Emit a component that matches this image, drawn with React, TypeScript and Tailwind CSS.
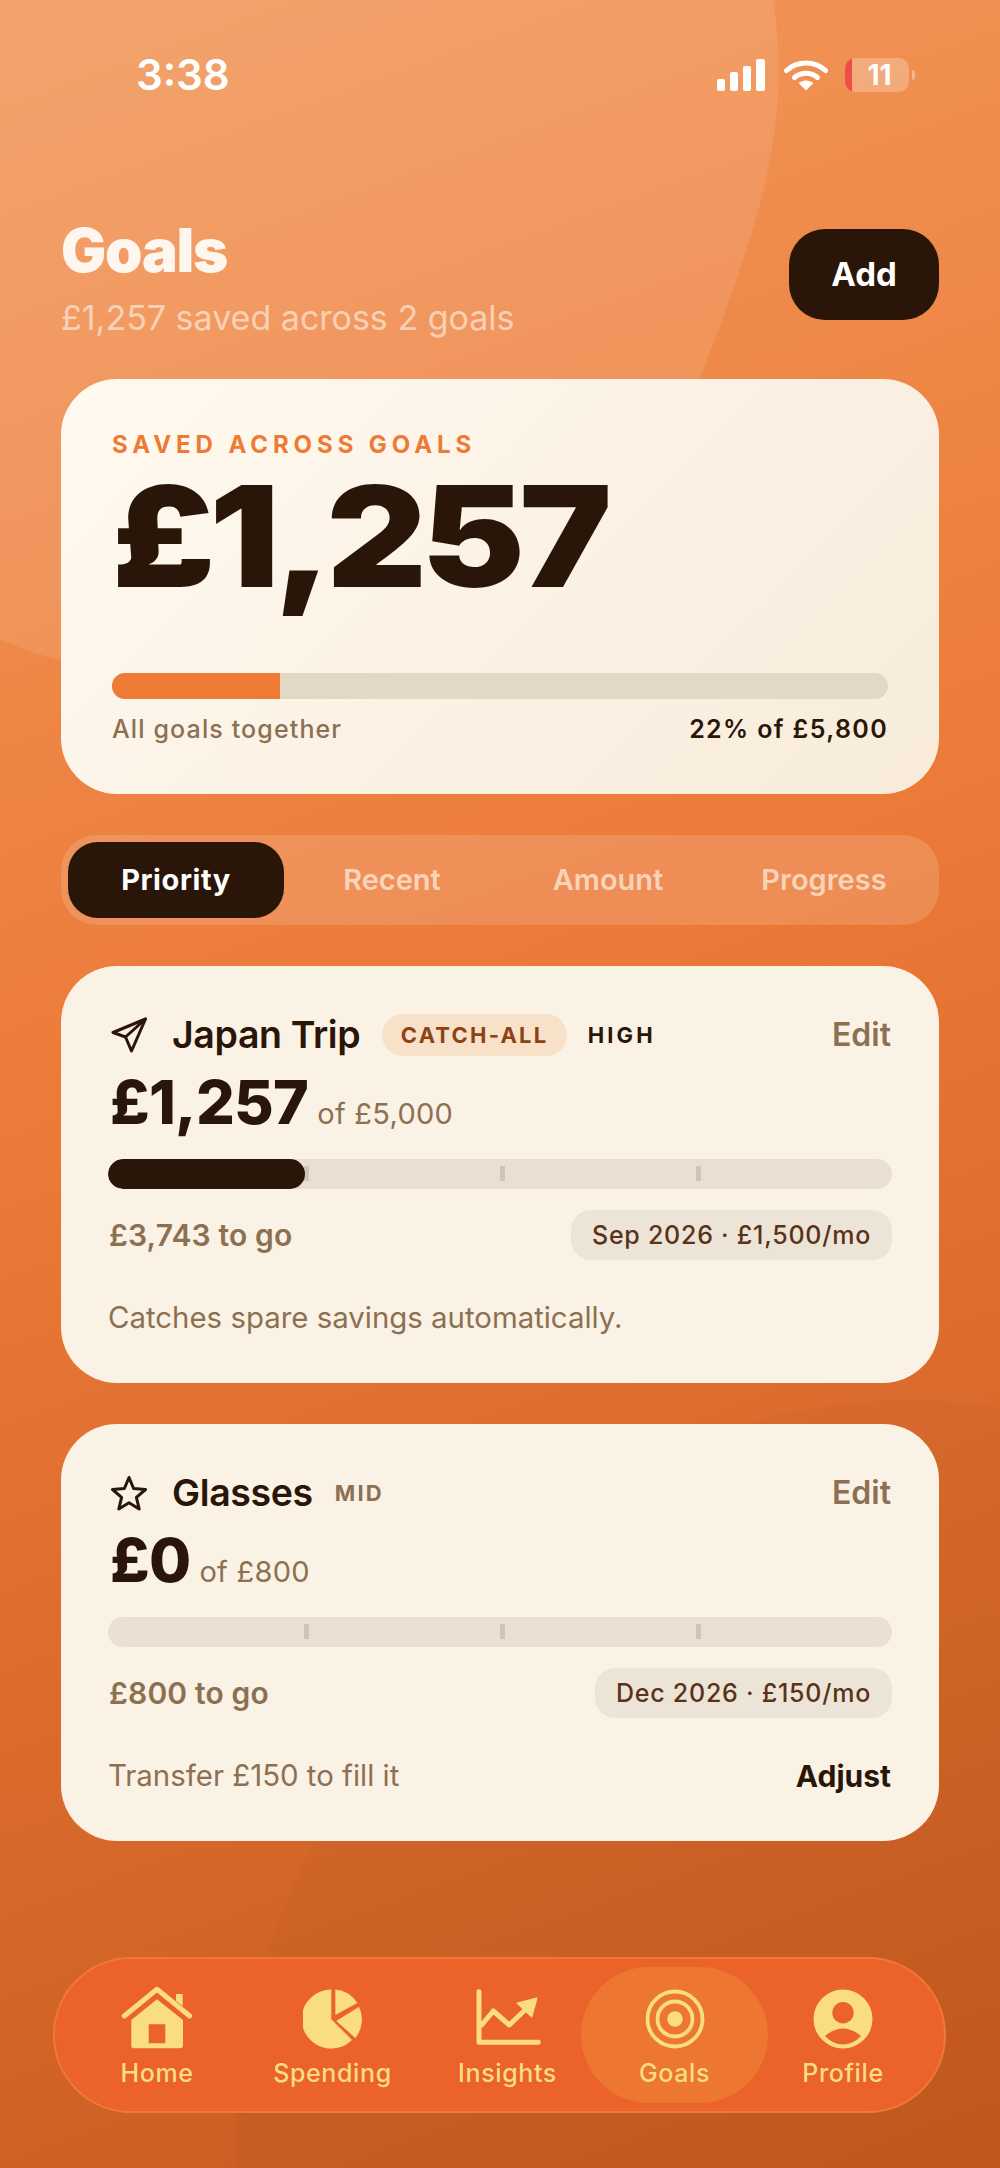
const CREAM = "#FADD7F";

function Signal() {
  return (
    <div className="flex h-[32px] items-end gap-[5px]">
      <div className="h-[12px] w-[8px] rounded-[2px] bg-white" />
      <div className="h-[19px] w-[8px] rounded-[2px] bg-white" />
      <div className="h-[25px] w-[8px] rounded-[2px] bg-white" />
      <div className="h-[32px] w-[9px] rounded-[2px] bg-white" />
    </div>
  );
}

function Wifi() {
  return (
    <svg width="44" height="32" viewBox="0 0 44 32" fill="none">
      <path d="M2.5 11.5C13.5 1.5 30.5 1.5 41.5 11.5" stroke="white" strokeWidth="5" strokeLinecap="round" />
      <path d="M10.5 18.5C17 12.8 27 12.8 33.5 18.5" stroke="white" strokeWidth="5" strokeLinecap="round" />
      <path d="M22 31.5L14.5 24C18.5 20.6 25.5 20.6 29.5 24Z" fill="white" />
    </svg>
  );
}

function Battery() {
  return (
    <div className="flex items-center gap-[3px]">
      <div className="relative flex h-[34px] w-[64px] items-center justify-center overflow-hidden rounded-[10px] bg-white/25 pl-[5px] text-[28px] font-bold leading-none text-white">
        <div className="absolute inset-y-0 left-0 w-[7px] bg-[#EC4E4A]" />
        11
      </div>
      <div className="h-[10px] w-[3px] rounded-r-full bg-white/35" />
    </div>
  );
}

function PlaneIcon() {
  return (
    <svg width="36" height="36" viewBox="0 0 36 36" fill="none" stroke="#2A1608" strokeWidth="3" strokeLinejoin="round" strokeLinecap="round">
      <path d="M34.5 2L2 15.5L14.5 20L20.5 34L34.5 2Z" />
      <path d="M34.5 2L14.5 20" />
    </svg>
  );
}

function StarIcon() {
  return (
    <svg width="36" height="36" viewBox="0 0 36 36" fill="none" stroke="#2A1608" strokeWidth="3" strokeLinejoin="round">
      <path d="M18 2.5L22.6 13.5L34.5 14.5L25.4 22.3L28.2 34L18 27.8L7.8 34L10.6 22.3L1.5 14.5L13.4 13.5Z" />
    </svg>
  );
}

function HomeIcon() {
  return (
    <svg width="72" height="66" viewBox="0 -2 72 66" fill="none">
      <path d="M3.3 31L36 4.3L68.7 31" stroke={CREAM} strokeWidth="5" strokeLinecap="round" strokeLinejoin="round" />
      <path d="M55 9H61.7V21L55 16Z" fill={CREAM} />
      <path fillRule="evenodd" clipRule="evenodd" d="M10.3 35L36 14.3L62 35V60.3C62 62.3 61 63.3 59 63.3H13C11 63.3 10.3 62.3 10.3 60.3ZM27.7 39.3V58.3H44.3V39.3Z" fill={CREAM} />
    </svg>
  );
}

function PieIcon() {
  return (
    <svg width="60" height="60" viewBox="0 0 60 60" fill={CREAM}>
      <path d="M28.3 .6V30.3L49 51A29.5 29.5 0 1 1 28.3 .6Z" />
      <path d="M32.3 .6V26L54.3 14A29.5 29.5 0 0 0 32.3 .6Z" />
      <path d="M33.3 32L56 17.7A29.5 29.5 0 0 1 52.3 49Z" />
    </svg>
  );
}

function ChartIcon() {
  return (
    <svg width="66" height="60" viewBox="0 1 66 60" fill="none">
      <path d="M4 3.7V54.3H63.3" stroke={CREAM} strokeWidth="5" strokeLinecap="round" strokeLinejoin="round" />
      <path d="M6.7 37L18.3 23L34.3 37L50 22" stroke={CREAM} strokeWidth="5" strokeLinecap="round" strokeLinejoin="round" />
      <path d="M61.7 10.3L42.3 15.3L56.7 28.7Z" fill={CREAM} stroke={CREAM} strokeWidth="1.5" strokeLinejoin="round" />
    </svg>
  );
}

function TargetIcon() {
  return (
    <svg width="60" height="60" viewBox="0 0 60 60" fill="none" stroke={CREAM} strokeWidth="3.8">
      <circle cx="30" cy="30" r="27.5" />
      <circle cx="30" cy="30" r="17.5" />
      <circle cx="30" cy="30" r="7.7" fill={CREAM} stroke="none" />
    </svg>
  );
}

function UserIcon() {
  return (
    <svg width="60" height="60" viewBox="0 0 60 60">
      <circle cx="30" cy="30" r="29.5" fill={CREAM} />
      <circle cx="30" cy="23.7" r="10.7" fill="#EB622B" />
      <path d="M12 47Q30 32 48 47Q40 55.5 30 55.5Q20 55.5 12 47Z" fill="#EB622B" />
    </svg>
  );
}

function Bar({ fill, ticks }: { fill?: number; ticks: number[] }) {
  return (
    <div className="relative mt-[28px] h-[30px] w-full overflow-hidden rounded-full bg-[#E9E0D3]">
      {ticks.map((t) => (
        <div
          key={t}
          className="absolute top-[7px] h-[15px] w-[5px] bg-[#CFC6B9]"
          style={{ left: `${t}%` }}
        />
      ))}
      {fill ? (
        <div className="absolute inset-y-0 left-0 rounded-full bg-[#2A1608]" style={{ width: `${fill}%` }} />
      ) : null}
    </div>
  );
}

function GoalCard({
  icon,
  name,
  chips,
  amount,
  of,
  fill,
  ticks,
  toGo,
  plan,
  footer,
  action,
}: {
  icon: React.ReactNode;
  name: string;
  chips: React.ReactNode;
  amount: string;
  of: string;
  fill?: number;
  ticks: number[];
  toGo: string;
  plan: string;
  footer: string;
  action?: string;
}) {
  return (
    <div className="rounded-[56px] bg-[#FBF2E6] px-[47px] pb-[48px] pt-[47px]">
      <div className="flex h-[44px] items-center">
        <div className="ml-[3px] flex w-[61px] items-center">{icon}</div>
        <div className="text-[37.5px] font-semibold leading-none tracking-[-0.01em] text-[#2A1608]">{name}</div>
        {chips}
        <div className="ml-auto pr-[1px] text-[32px] font-semibold leading-none text-[#8C7052]">Edit</div>
      </div>
      <div className="mt-[16px] flex h-[58px] items-baseline pl-[2px]">
        <div className="text-[61px] font-extrabold leading-[58px] tracking-[-0.012em] text-[#2A1608]">{amount}</div>
        <div className="ml-[9px] text-[29px] leading-none tracking-[0.01em] text-[#8C7052]">{of}</div>
      </div>
      <Bar fill={fill} ticks={ticks} />
      <div className="mt-[21px] flex items-center justify-between">
        <div className="pl-[1px] text-[30px] font-semibold leading-none tracking-[0.005em] text-[#8C7052]">{toGo}</div>
        <div className="flex h-[50px] items-center rounded-[20px] bg-[#EDE4D8] px-[21px] text-[25px] font-medium leading-none tracking-[0.03em] text-[#5A3218]">
          {plan}
        </div>
      </div>
      <div className="mt-[41px] flex h-[34px] items-center justify-between">
        <div className="text-[29.4px] leading-none text-[#8C7052]">{footer}</div>
        {action ? <div className="pr-[1px] text-[30px] font-bold leading-none text-[#2A1608]">{action}</div> : null}
      </div>
    </div>
  );
}

function NavItem({ icon, label, w, active }: { icon: React.ReactNode; label: string; w: string; active?: boolean }) {
  return (
    <div
      className={`flex h-[136px] flex-col items-center justify-start pt-[16px] ${w} ${
        active ? "rounded-[68px] bg-[#ED7630]" : ""
      }`}
    >
      <div className="flex h-[66px] items-end justify-center">{icon}</div>
      <div className="mt-[12px] text-[25px] font-medium leading-none tracking-[0.025em] text-[#FADD7F]">{label}</div>
    </div>
  );
}

export default function App() {
  return (
    <div className="relative h-[2168px] w-[1000px] overflow-hidden bg-[linear-gradient(160deg,#F29A5D_0%,#EC7A38_45%,#C4581F_100%)] font-[Inter,sans-serif]">
      <svg className="absolute inset-0" width="1000" height="2168" viewBox="0 0 1000 2168" fill="none">
        <path
          d="M0 0H773C790 110 770 200 700 378C640 520 300 700 60 660C40 655 20 648 0 640Z"
          fill="white"
          fillOpacity="0.1"
        />
        <path
          d="M1000 1408C910 1392 810 1402 740 1425C500 1600 230 1800 235 2168H1000Z"
          fill="black"
          fillOpacity="0.02"
        />
      </svg>

      <div className="relative px-[61px]">
        <div className="flex h-[229px] items-start justify-between">
          <div className="ml-[75px] mt-[50px] text-[42px] font-semibold leading-[50px] text-white">3:38</div>
          <div className="mr-[24px] mt-[58px] flex items-center gap-[19px]">
            <Signal />
            <div className="flex items-center gap-[17px]">
              <Wifi />
              <Battery />
            </div>
          </div>
        </div>

        <div className="flex h-[91px] items-start justify-between">
          <div className="-mt-[9px]">
            <div className="text-[60px] font-black leading-[60px] tracking-[-0.02em] text-[#FFF7EF]">Goals</div>
            <div className="mt-[18px] text-[34px] leading-[40px] text-[#FFF7EF]/60">
              £1,257 saved across 2 goals
            </div>
          </div>
          <div className="flex h-[91px] w-[150px] items-center justify-center rounded-[36px] bg-[#2A1608] text-[33px] font-bold text-white">
            Add
          </div>
        </div>

        <div className="mt-[59px] h-[415px] rounded-[56px] bg-[linear-gradient(135deg,#FFFAF0,#F8EBDA)] px-[51px] pt-[52px]">
          <div className="text-[24px] font-bold leading-[28px] tracking-[0.205em] text-[#EE7A35]">SAVED ACROSS GOALS</div>
          <div className="mt-[7px] origin-left scale-x-[1.109] text-[140px] font-black leading-[140px] tracking-[-0.035em] text-[#2A1608]">£1,257</div>
          <div className="mt-[67px] h-[26px] w-full overflow-hidden rounded-full bg-[#E3D7C6]">
            <div className="h-full w-[21.6%] bg-[#EE7A35]" />
          </div>
          <div className="mt-[15px] flex items-center justify-between">
            <div className="text-[25px] font-medium leading-[30px] tracking-[0.045em] text-[#8C7052]">All goals together</div>
            <div className="text-[25px] font-semibold leading-[30px] tracking-[0.055em] text-[#2A1608]">22% of £5,800</div>
          </div>
        </div>

        <div className="mt-[41px] flex h-[90px] items-center rounded-[36px] bg-white/15 p-[7px] text-[29px] font-semibold">
          <div className="flex h-[76px] flex-1 items-center justify-center rounded-[30px] bg-[#2A1608] font-bold tracking-[0.02em] text-white">Priority</div>
          <div className="flex h-[76px] flex-1 items-center justify-center text-[#FFF3E6]/70">Recent</div>
          <div className="flex h-[76px] flex-1 items-center justify-center text-[#FFF3E6]/70">Amount</div>
          <div className="flex h-[76px] flex-1 items-center justify-center text-[#FFF3E6]/70">Progress</div>
        </div>

        <div className="mt-[41px] flex flex-col gap-[41px]">
          <GoalCard
            icon={<PlaneIcon />}
            name="Japan Trip"
            chips={
              <>
                <div className="ml-[22px] flex h-[42px] items-center rounded-full bg-[#F8E1C9] px-[18.5px] text-[22px] font-bold leading-none tracking-[0.1em] text-[#8E4213]">
                  CATCH-ALL
                </div>
                <div className="ml-[21px] text-[22px] font-bold leading-none tracking-[0.14em] text-[#2A1608]">HIGH</div>
              </>
            }
            amount="£1,257"
            of="of £5,000"
            fill={25.1}
            ticks={[25, 50, 75]}
            toGo="£3,743 to go"
            plan="Sep 2026 · £1,500/mo"
            footer="Catches spare savings automatically."
          />
          <GoalCard
            icon={<StarIcon />}
            name="Glasses"
            chips={<div className="ml-[22px] text-[22px] font-bold leading-none tracking-[0.1em] text-[#8C7052]">MID</div>}
            amount="£0"
            of="of £800"
            ticks={[25, 50, 75]}
            toGo="£800 to go"
            plan="Dec 2026 · £150/mo"
            footer="Transfer £150 to fill it"
            action="Adjust"
          />
        </div>
      </div>

      <div className="absolute left-[53px] top-[1957px] flex h-[156px] w-[893px] items-center rounded-full border-2 border-[#EE7A35] bg-[#EB622B] pl-[14px]">
        <NavItem icon={<HomeIcon />} label="Home" w="w-[176px]" />
        <NavItem icon={<PieIcon />} label="Spending" w="w-[175px]" />
        <NavItem icon={<ChartIcon />} label="Insights" w="w-[161px] pl-[14px]" />
        <NavItem icon={<TargetIcon />} label="Goals" w="w-[187px]" active />
        <NavItem icon={<UserIcon />} label="Profile" w="w-[150px]" />
      </div>
    </div>
  );
}
